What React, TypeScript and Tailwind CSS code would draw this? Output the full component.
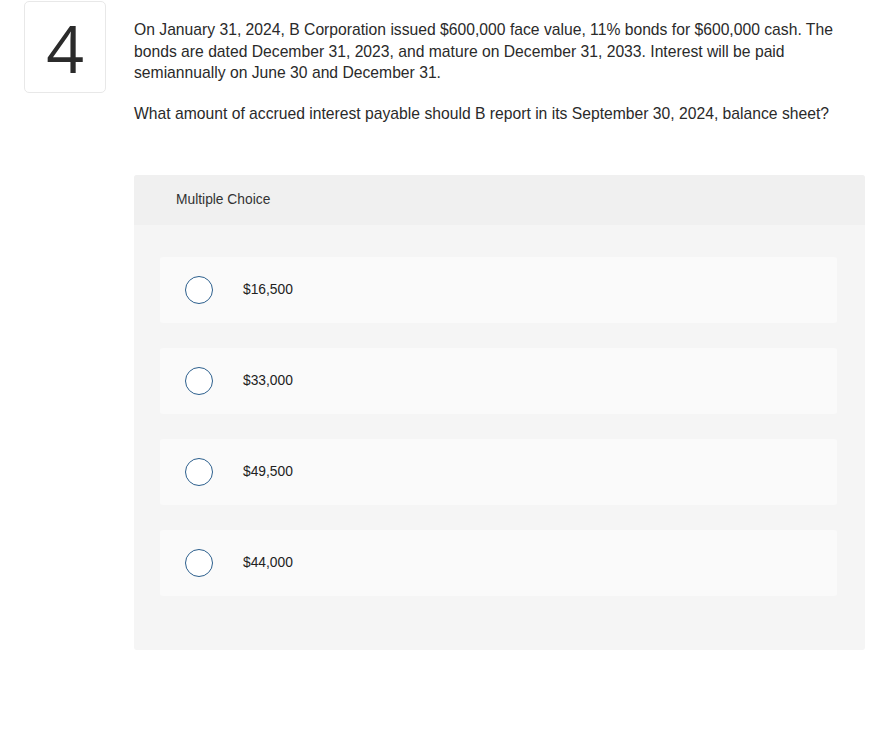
export default function App() {
  const options = ['$16,500', '$33,000', '$49,500', '$44,000']

  return (
    <div className="min-h-screen bg-white font-['Liberation_Sans',Arial,sans-serif] text-[#222]">
      <div className="flex gap-[28px] pl-[24px] pr-[12px] pt-[1px]">
        <div className="flex h-[92px] w-[82px] shrink-0 items-center justify-center rounded-[5px] border border-[#e8e8e8]">
          <span className="font-['Open_Sans',sans-serif] text-[66px] leading-none font-normal text-[#2b2b2b]">4</span>
        </div>

        <div className="flex-1 pt-[18px]">
          <p className="text-[15.7px] leading-[21.5px] text-[#2a2a2a]">
            On January 31, 2024, B Corporation issued $600,000 face value, 11% bonds for $600,000 cash. The
            <br />
            bonds are dated December 31, 2023, and mature on December 31, 2033. Interest will be paid
            <br />
            semiannually on June 30 and December 31.
          </p>
          <p className="mt-[19px] text-[15.7px] leading-[21.5px] text-[#2a2a2a]">
            What amount of accrued interest payable should B report in its September 30, 2024, balance sheet?
          </p>

          <div className="mt-[51px] overflow-hidden rounded-[3px] bg-[#f5f5f5]">
            <div className="flex h-[50px] items-center bg-[#f0f0f0] pl-[42px] text-[13.8px] text-[#333]">
              Multiple Choice
            </div>
            <div className="flex flex-col gap-[25px] pt-[32px] pb-[54px] pl-[26px] pr-[28px]">
              {options.map((o) => (
                <div key={o} className="flex h-[66px] items-center rounded-[3px] bg-[#fafafa] pl-[25px]">
                  <span className="h-[28px] w-[28px] shrink-0 rounded-full border-[1.5px] border-[#2c5f8d] bg-white" />
                  <span className="ml-[30px] text-[13.8px] text-[#222]">{o}</span>
                </div>
              ))}
            </div>
          </div>
        </div>
      </div>
    </div>
  )
}
